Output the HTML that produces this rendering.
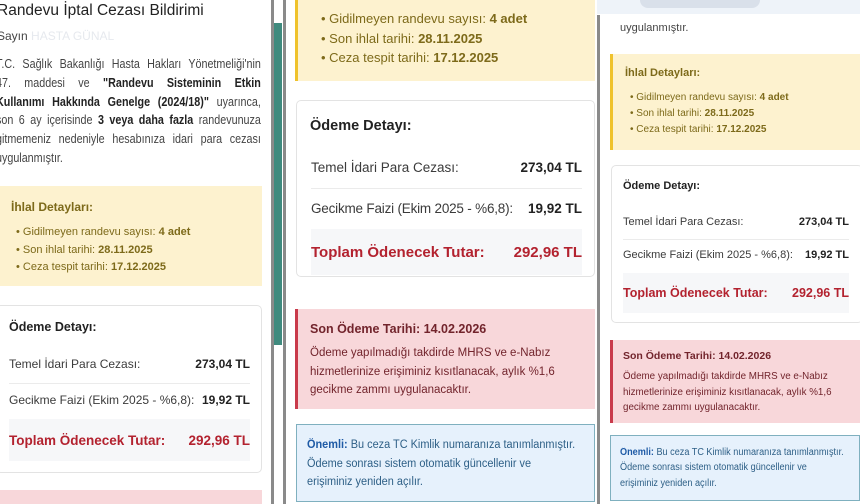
<!DOCTYPE html>
<html><head><meta charset="utf-8"><style>
*{margin:0;padding:0;box-sizing:border-box}
body{width:860px;height:504px;overflow:hidden;background:#fff;position:relative;font-family:"Liberation Sans",sans-serif;color:#333}
.a{position:absolute}
.y{background:#fdf2cf;color:#7d6a1a}
.r{background:#f8d7da;color:#72242c}
.bl{background:#e6f1fc;color:#2d5f86;border:1.5px solid #7fb0bf}
.card{background:#fff;border:1px solid #e3e3e3;border-radius:5px}
b{font-weight:bold}
.row{position:absolute;display:flex;justify-content:space-between;color:#3b3b3b}
.row b{color:#222}
.tot{position:absolute;background:#f6f7f9;display:flex;justify-content:space-between;align-items:center;color:#b3222f;font-weight:bold}
.sep{position:absolute;height:1px;background:#ebebeb}
ul{list-style:none}
li:before{content:"• ";}
.jl{display:block;width:325px;text-align:justify;text-align-last:justify;height:18.8px}
.nw{white-space:nowrap}
</style></head><body>

<!-- PANEL 1 -->
<div class="a" style="left:-3px;top:2px;font-size:15.5px;color:#222">Randevu İptal Cezası Bildirimi</div>
<div class="a" style="left:-3px;top:29px;font-size:12px;color:#444">Sayın <span style="color:#e6e9ee">HASTA GÜNAL</span></div>
<div class="a" style="left:-4px;top:55px;font-size:13.2px;line-height:18.8px;color:#444;transform:scaleX(0.815);transform-origin:0 0">
 <div class="jl">T.C. Sağlık Bakanlığı Hasta Hakları Yönetmeliği'nin</div>
 <div class="jl">47. maddesi ve <b style="color:#222">"Randevu Sisteminin Etkin</b></div>
 <div class="jl"><b style="color:#222">Kullanımı Hakkında Genelge (2024/18)"</b> uyarınca,</div>
 <div class="jl">son 6 ay içerisinde <b style="color:#222">3 veya daha fazla</b> randevunuza</div>
 <div class="jl">gitmemeniz nedeniyle hesabınıza idari para cezası</div>
 <div style="display:block">uygulanmıştır.</div>
</div>
<div class="a y" style="left:0;top:186px;width:262px;height:100px">
 <div class="a" style="left:11px;top:14px;font-size:12px;font-weight:bold">İhlal Detayları:</div>
 <ul class="a" style="left:16px;top:38px;font-size:11px;line-height:17.5px">
  <li>Gidilmeyen randevu sayısı: <b>4 adet</b></li>
  <li>Son ihlal tarihi: <b>28.11.2025</b></li>
  <li>Ceza tespit tarihi: <b>17.12.2025</b></li>
 </ul>
</div>
<div class="a card" style="left:-4px;top:305px;width:266px;height:168px">
 <div class="a" style="left:12px;top:14px;font-size:12.5px;font-weight:bold;color:#222">Ödeme Detayı:</div>
 <div class="row" style="left:12px;top:51px;width:241px;font-size:12px"><span>Temel İdari Para Cezası:</span><b>273,04 TL</b></div>
 <div class="sep" style="left:12px;top:77px;width:241px"></div>
 <div class="row" style="left:12px;top:87px;width:241px;font-size:12px"><span>Gecikme Faizi (Ekim 2025 - %6,8):</span><b>19,92 TL</b></div>
 <div class="tot" style="left:12px;top:113px;width:241px;height:42px;font-size:13.5px"><span>Toplam Ödenecek Tutar:</span><span>292,96 TL</span></div>
</div>
<div class="a r" style="left:0;top:490px;width:262px;height:14px"></div>

<!-- DIVIDER 1 -->
<div class="a" style="left:271px;top:0;width:3px;height:504px;background:#8a8a8a"></div>
<div class="a" style="left:274px;top:23px;width:8px;height:322px;background:#3f8a7e"></div>
<div class="a" style="left:283px;top:0;width:3px;height:504px;background:#8a8a8a"></div>

<!-- PANEL 2 -->
<div class="a y" style="left:295px;top:0;width:300px;height:81px;border-left:3px solid #efc22c">
 <ul class="a" style="left:23px;top:9px;font-size:13px;line-height:19.5px">
  <li>Gidilmeyen randevu sayısı: <b>4 adet</b></li>
  <li>Son ihlal tarihi: <b>28.11.2025</b></li>
  <li>Ceza tespit tarihi: <b>17.12.2025</b></li>
 </ul>
</div>
<div class="a card" style="left:296px;top:100px;width:299px;height:177px">
 <div class="a" style="left:13px;top:17px;font-size:14.5px;font-weight:bold;color:#222">Ödeme Detayı:</div>
 <div class="row" style="left:14px;top:59px;width:271px;font-size:13.5px"><span>Temel İdari Para Cezası:</span><b>273,04 TL</b></div>
 <div class="sep" style="left:14px;top:87px;width:271px"></div>
 <div class="row" style="left:14px;top:100px;width:271px;font-size:13.5px"><span style="letter-spacing:-0.2px">Gecikme Faizi (Ekim 2025 - %6,8):</span><b>19,92 TL</b></div>
 <div class="tot" style="left:14px;top:128px;width:271px;height:46px;font-size:15px"><span>Toplam Ödenecek Tutar:</span><span>292,96 TL</span></div>
</div>
<div class="a r" style="left:295px;top:309px;width:300px;height:100px;border-left:3px solid #c93a4b">
 <div class="a" style="left:12px;top:13px;font-size:12.5px;font-weight:bold">Son Ödeme Tarihi: 14.02.2026</div>
 <div class="a nw" style="left:12px;top:35px;font-size:11.5px;line-height:18.5px">Ödeme yapılmadığı takdirde MHRS ve e-Nabız<br>hizmetlerinize erişiminiz kısıtlanacak, aylık %1,6<br>gecikme zammı uygulanacaktır.</div>
</div>
<div class="a bl" style="left:296px;top:424px;width:299px;height:78px">
 <div class="a nw" style="left:10px;top:11px;font-size:11.5px;line-height:18.5px;transform:scaleX(0.95);transform-origin:0 0"><b style="color:#1f5ba6">Önemli:</b> Bu ceza TC Kimlik numaranıza tanımlanmıştır.<br>Ödeme sonrası sistem otomatik güncellenir ve<br>erişiminiz yeniden açılır.</div>
</div>

<!-- DIVIDER 2 -->
<div class="a" style="left:597px;top:15px;width:3px;height:489px;background:#8a8a8a"></div>

<!-- PANEL 3 -->
<div class="a" style="left:597px;top:0;width:263px;height:14px;background:#eef3f9"></div>
<div class="a" style="left:640px;top:0;width:120px;height:8px;background:#d9e0ea;border-radius:0 0 12px 12px"></div>
<div class="a" style="left:620px;top:22px;font-size:11px;color:#444">uygulanmıştır.</div>
<div class="a y" style="left:610px;top:54px;width:250px;height:96px;border-left:3px solid #efc22c">
 <div class="a" style="left:12px;top:13px;font-size:11px;font-weight:bold">İhlal Detayları:</div>
 <ul class="a" style="left:17px;top:36px;font-size:10px;line-height:16px">
  <li>Gidilmeyen randevu sayısı: <b>4 adet</b></li>
  <li>Son ihlal tarihi: <b>28.11.2025</b></li>
  <li>Ceza tespit tarihi: <b>17.12.2025</b></li>
 </ul>
</div>
<div class="a card" style="left:611px;top:165px;width:252px;height:158px">
 <div class="a" style="left:11px;top:14px;font-size:11px;font-weight:bold;color:#222">Ödeme Detayı:</div>
 <div class="row" style="left:11px;top:50px;width:226px;font-size:11px"><span>Temel İdari Para Cezası:</span><b>273,04 TL</b></div>
 <div class="sep" style="left:11px;top:73px;width:226px"></div>
 <div class="row" style="left:11px;top:83px;width:226px;font-size:11px"><span>Gecikme Faizi (Ekim 2025 - %6,8):</span><b>19,92 TL</b></div>
 <div class="tot" style="left:11px;top:107px;width:226px;height:40px;font-size:12.5px"><span>Toplam Ödenecek Tutar:</span><span>292,96 TL</span></div>
</div>
<div class="a r" style="left:610px;top:340px;width:250px;height:83px;border-left:3px solid #c93a4b">
 <div class="a" style="left:10px;top:10px;font-size:10.5px;font-weight:bold">Son Ödeme Tarihi: 14.02.2026</div>
 <div class="a nw" style="left:10px;top:29px;font-size:9.8px;line-height:15.5px">Ödeme yapılmadığı takdirde MHRS ve e-Nabız<br>hizmetlerinize erişiminiz kısıtlanacak, aylık %1,6<br>gecikme zammı uygulanacaktır.</div>
</div>
<div class="a bl" style="left:610px;top:435px;width:250px;height:66px">
 <div class="a nw" style="left:9px;top:9px;font-size:9.8px;line-height:15.3px;transform:scaleX(0.93);transform-origin:0 0"><b style="color:#1f5ba6">Önemli:</b> Bu ceza TC Kimlik numaranıza tanımlanmıştır.<br>Ödeme sonrası sistem otomatik güncellenir ve<br>erişiminiz yeniden açılır.</div>
</div>

</body></html>
